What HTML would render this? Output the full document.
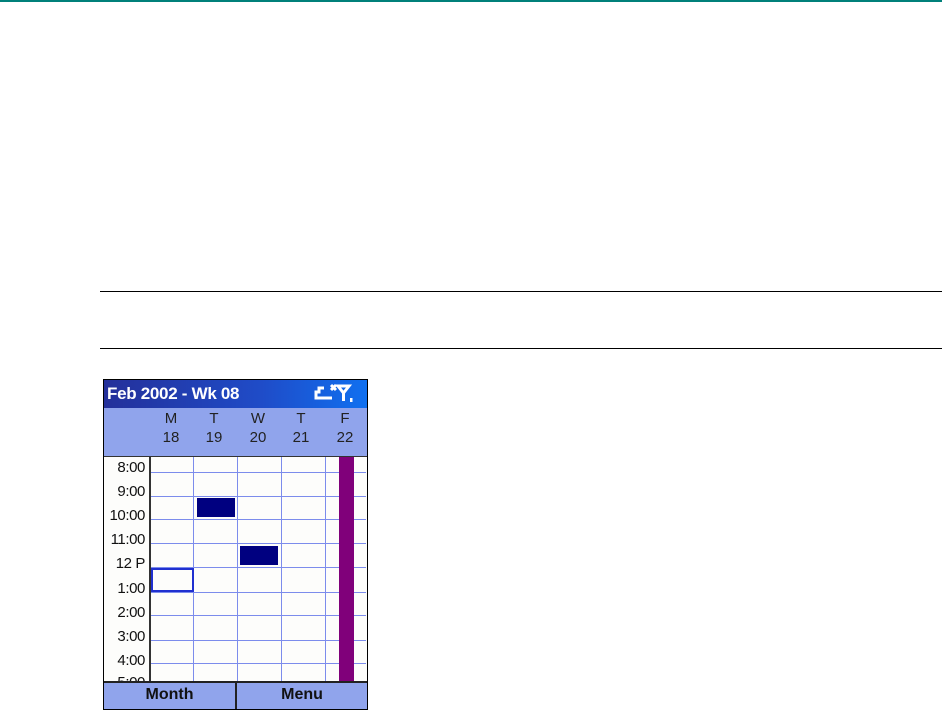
<!DOCTYPE html>
<html><head><meta charset="utf-8"><style>
html,body{margin:0;padding:0;background:#fff;width:942px;height:710px;overflow:hidden;position:relative;font-family:"Liberation Sans",sans-serif}
div{position:absolute;box-sizing:border-box}
.t{font-size:15px;color:#111;text-align:right;width:47px;left:98px;line-height:16px;letter-spacing:-0.4px}
.hl{left:151px;width:215px;height:1px;background:#7c8cec}
.vl{top:457px;height:224px;width:1px;background:#7c8cec}
.d{font-size:15px;color:#222;text-align:center;width:30px;line-height:19px}
</style></head><body>
<div style="left:0;top:0;width:942px;height:2px;background:#00807a"></div>
<div style="left:100px;top:291px;width:842px;height:1px;background:#000"></div>
<div style="left:100px;top:348px;width:842px;height:1px;background:#000"></div>

<div style="left:103px;top:379px;width:265px;height:331px;background:#000"></div>
<div style="left:104px;top:380px;width:263px;height:28px;background:linear-gradient(90deg,#24309a,#1f4cc8 60%,#1070f0);color:#fff;font-weight:bold;font-size:17px;line-height:28px;padding-left:3px;letter-spacing:-0.3px">Feb 2002 - Wk 08</div>
<svg style="position:absolute;left:310px;top:382px" width="56" height="24" viewBox="0 0 56 24"><g stroke="#fff" stroke-width="3" fill="none"><path d="M14 6h-5v4h-3v6h16"/><path d="M21 3l5 5M26 3l-5 5"/><path d="M28 4h11l-5.5 7z"/><path d="M33.5 10v9"/></g><rect x="40" y="16" width="2.5" height="4" fill="#fff"/></svg>
<div style="left:104px;top:408px;width:263px;height:48px;background:#90a4ec"></div>
<div class="d" style="left:156px;top:409px">M<br>18</div>
<div class="d" style="left:199px;top:409px">T<br>19</div>
<div class="d" style="left:243px;top:409px">W<br>20</div>
<div class="d" style="left:286px;top:409px">T<br>21</div>
<div class="d" style="left:330px;top:409px">F<br>22</div>
<div style="left:104px;top:456px;width:263px;height:1px;background:#333"></div>
<div style="left:104px;top:457px;width:263px;height:224px;background:#fdfdfb"></div>
<div style="left:149px;top:457px;width:2px;height:224px;background:#333"></div>
<div class="hl" style="top:472px"></div><div class="hl" style="top:496px"></div><div class="hl" style="top:519px"></div><div class="hl" style="top:543px"></div><div class="hl" style="top:567px"></div><div class="hl" style="top:592px"></div><div class="hl" style="top:615px"></div><div class="hl" style="top:640px"></div><div class="hl" style="top:663px"></div>
<div class="vl" style="left:193px"></div><div class="vl" style="left:237px"></div><div class="vl" style="left:281px"></div><div class="vl" style="left:325px"></div>
<div style="left:339px;top:457px;width:15px;height:224px;background:#80007a"></div>
<div style="left:197px;top:498px;width:38px;height:19px;background:#000080"></div>
<div style="left:240px;top:546px;width:38px;height:19px;background:#000080"></div>
<div style="left:151px;top:568px;width:43px;height:24px;border:2px solid #2030d0"></div>
<div class="t" style="top:460px">8:00</div>
<div class="t" style="top:484px">9:00</div>
<div class="t" style="top:508px">10:00</div>
<div class="t" style="top:532px">11:00</div>
<div class="t" style="top:556px">12 P</div>
<div class="t" style="top:581px">1:00</div>
<div class="t" style="top:605px">2:00</div>
<div class="t" style="top:629px">3:00</div>
<div class="t" style="top:653px">4:00</div>
<div class="t" style="top:677px;height:4px;overflow:hidden;line-height:16px"><span style="position:relative;top:-2px">5:00</span></div>
<div style="left:104px;top:681px;width:263px;height:2px;background:#222"></div>
<div style="left:104px;top:683px;width:131px;height:26px;background:#90a4ec;font-weight:bold;font-size:16px;text-align:center;line-height:24px;color:#111">Month</div>
<div style="left:235px;top:683px;width:2px;height:26px;background:#222"></div>
<div style="left:237px;top:683px;width:130px;height:26px;background:#90a4ec;font-weight:bold;font-size:16px;text-align:center;line-height:24px;color:#111">Menu</div>
</body></html>
